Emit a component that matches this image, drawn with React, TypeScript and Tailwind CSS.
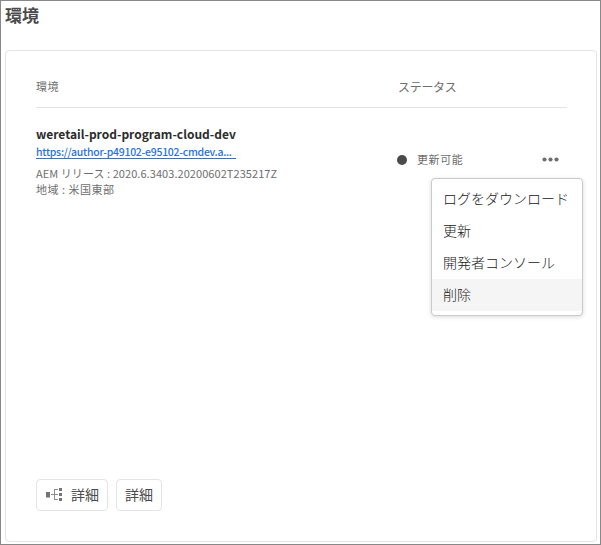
import React from "react";

const menuItems = [
  { label: "ログをダウンロード" },
  { label: "更新" },
  { label: "開発者コンソール" },
  { label: "削除", active: true },
];

function TreeIcon() {
  return (
    <svg width="17" height="14" viewBox="0 0 17 14" className="shrink-0" shapeRendering="crispEdges">
      <path fill="#747474" d="M0 4h4v5H0zM13 0h3v3h-3zM13 5h3v3h-3zM13 10h3v3h-3z" />
      <path fill="#b5b5b5" d="M0 9h4v1H0z" />
      <path fill="#8c8c8c" d="M5 6h7v1H5zM8 1h4v1H8zM8 11h4v1H8zM8 1h1v11H8z" />
    </svg>
  );
}

function ActionMenu() {
  return (
    <ul className="absolute top-[28px] right-[-16px] z-10 h-[138px] w-[152px] rounded-[4px] border border-[#cacaca] bg-white pt-[4px] font-light shadow-[0_1px_4px_rgba(0,0,0,0.15)]">
      {menuItems.map((item) => (
        <li
          key={item.label}
          className={`h-8 pl-[11px] text-[14px] leading-[30px] whitespace-nowrap text-[#202020] ${item.active ? "bg-[#f5f5f5]" : ""}`}
        >
          {item.label}
        </li>
      ))}
    </ul>
  );
}

export default function App() {
  return (
    <div className="flex h-[545px] w-[601px] flex-col overflow-hidden border border-[#888] bg-white pr-[3px] pb-[2px] pl-1 font-['Noto_Sans_CJK_JP','Noto_Sans',sans-serif] text-[#4b4b4b]">
      <h1 className="h-[49px] pt-[2px] text-[17px] leading-6 font-bold">環境</h1>
      <section className="flex h-[492px] flex-col rounded-[4px] border border-[#e4e4e4] px-[30px] pr-[29px]">
        <div className="flex h-[57px] shrink-0 border-b border-[#e4e4e4] pt-[27px] text-[11px] leading-4 text-[#6e6e6e]">
          <div className="w-[361px] tracking-[0.5px]">環境</div>
          <div className="pt-px pl-px text-[12px] tracking-[-0.3px]">ステータス</div>
        </div>
        <div className="flex pt-[16px]">
          <div className="w-[361px]">
            <h2 className="h-[21px] text-[12px] leading-[20px] font-bold whitespace-nowrap text-[#2c2c2c]">
              weretail-prod-program-cloud-dev
            </h2>
            <a className="block h-[14px] w-[200px] border-b border-[#2a72e0] text-[10.5px] leading-[13px] font-medium tracking-[-0.27px] whitespace-nowrap text-[#2a72e0]">
              https://author-p49102-e95102-cmdev.a...
            </a>
            <p className="mt-[6px] h-4 text-[11px] leading-4 tracking-[0.06px] whitespace-nowrap text-[#6e6e6e]">
              AEM リリース : 2020.6.3403.20200602T235217Z
            </p>
            <p className="h-4 text-[11px] leading-4 tracking-[0.5px] text-[#6e6e6e]">地域 : 米国東部</p>
          </div>
          <div className="relative mt-[26px] flex h-[20px] flex-1 items-center">
            <span className="size-[10px] rounded-full bg-[#4b4b4b]" />
            <span className="mb-[2px] ml-[10px] text-[11px] leading-4 tracking-[0.6px] text-[#6e6e6e]">更新可能</span>
            <svg className="mr-[8px] mb-[2px] ml-auto" width="17" height="5" viewBox="0 0 17 5" fill="#6e6e6e">
              <circle cx="2.5" cy="2.5" r="2.1" />
              <circle cx="8.5" cy="2.5" r="2.1" />
              <circle cx="14.5" cy="2.5" r="2.1" />
            </svg>
            <ActionMenu />
          </div>
        </div>
        <div className="mt-auto mb-[30px] flex gap-2 text-[14px] leading-[28px]">
          <button className="flex h-8 w-[72px] items-center gap-[8px] rounded-[4px] border border-[#e4e4e4] pl-[9px]">
            <TreeIcon />
            <span className="pb-[2px]">詳細</span>
          </button>
          <button className="h-8 w-[46px] rounded-[4px] border border-[#e4e4e4] pb-[2px]">詳細</button>
        </div>
      </section>
    </div>
  );
}
